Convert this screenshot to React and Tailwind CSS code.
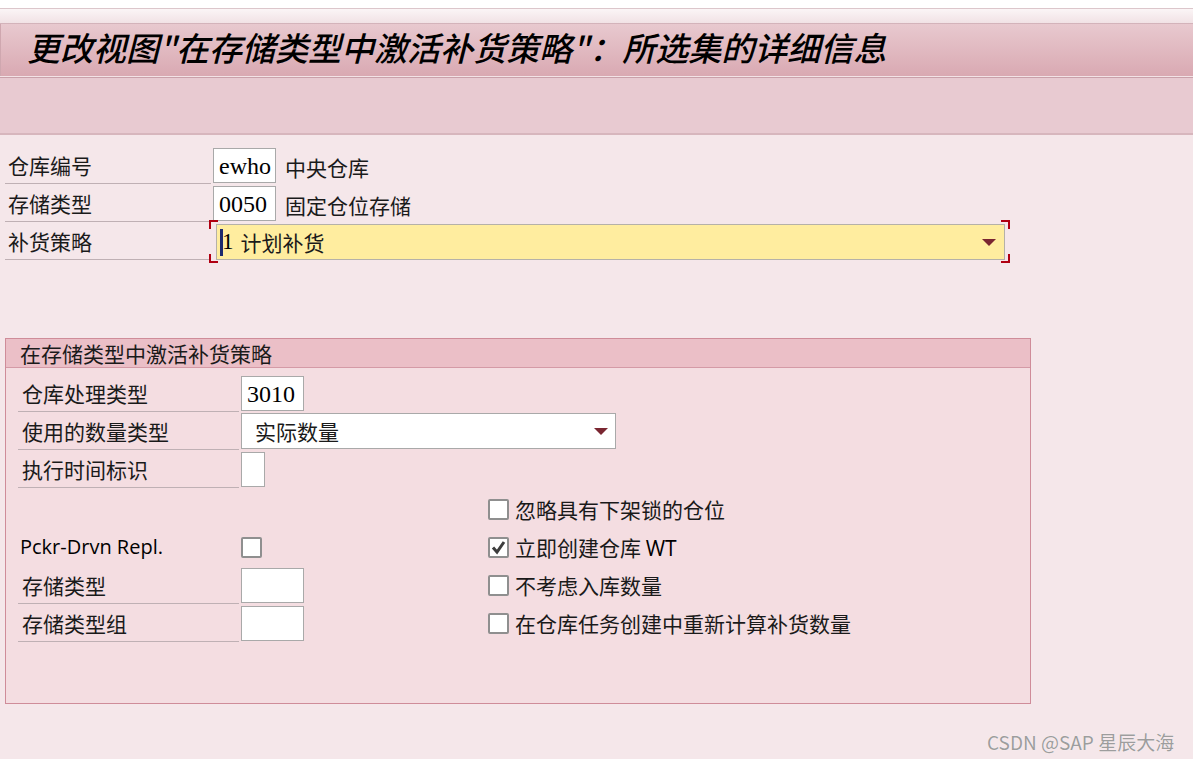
import React from 'react';

const cjk = { fontFamily: '"Noto Sans CJK SC", "Noto Sans", sans-serif' };
const serif = { fontFamily: '"Liberation Serif", "Noto Sans CJK SC", serif' };
const latin = { fontFamily: '"Open Sans", "Noto Sans", sans-serif' };

// small dark-red dropdown arrow
const Arrow = () => (
  <svg width="14" height="8" viewBox="0 0 14 8">
    <path d="M0 0 H14 L7 7 Z" fill="#7a2631" />
  </svg>
);

const Checkbox = ({ checked }) => (
  <div className="w-[21px] h-[21px] border-2 border-[#8f8f8f] rounded-[2px] bg-white flex items-center justify-center">
    {checked && (
      <svg width="15" height="15" viewBox="0 0 15 15">
        <path d="M2 7.5 L6 12 L13 2" fill="none" stroke="#3d3d3d" strokeWidth="3" />
      </svg>
    )}
  </div>
);

// one label row with underline
function Row({ label, labelW, children, line = true, pl = 'pl-[3px]' }) {
  return (
    <div className="flex h-[38px]">
      <div
        className={`${labelW} ${pl} pt-[3px] h-[38px] flex items-center text-[21px] text-[#1a1a1a] ${line ? 'border-b border-[#bfb0b4]' : ''}`}
      >
        {label}
      </div>
      {children}
    </div>
  );
}

const Box = ({ w, text, size = 'text-[24px]' }) => (
  <div
    className={`${w} h-[35px] mt-[2px] ml-[2px] bg-white border border-[#a9a9a9] flex items-center pl-[5px] ${size} text-black`}
    style={serif}
  >
    {text}
  </div>
);

export default function App() {
  return (
    <div className="w-[1193px] h-[759px] bg-[#f5e7ea] relative overflow-hidden" style={cjk}>
      <div className="h-[8px] bg-white" />
      <div className="h-[1px] bg-[#dcc6cb]" />
      <div className="h-[14px] bg-gradient-to-b from-[#fbf5f6] to-[#f1e2e5]" />
      <div className="h-[1px] bg-[#d3b3ba]" />

      {/* title bar */}
      <div className="h-[52px] bg-gradient-to-b from-[#e8c9cf] to-[#d9a9b2] flex items-center pl-[26px] pb-[6px] border-l border-[#cfa7af]">
        <h1 className="text-[33px] italic font-medium text-black leading-none">
          更改视图"在存储类型中激活补货策略"：所选集的详细信息
        </h1>
      </div>
      <div className="h-[1px] bg-[#f3e3e6]" />
      <div className="h-[1px] bg-[#c9a1aa]" />

      {/* toolbar area */}
      <div className="h-[55px] bg-[#e8cad1]" />
      <div className="h-[2px] bg-[#d7b6bd]" />

      {/* header form */}
      <div className="pt-[11px] pl-[5px]">
        <Row label="仓库编号" labelW="w-[206px]">
          <Box w="w-[63px]" text="ewho" />
          <span className="ml-[9px] mt-[4px] h-[35px] flex items-center text-[21px] text-[#1a1a1a]">中央仓库</span>
        </Row>
        <Row label="存储类型" labelW="w-[206px]">
          <Box w="w-[63px]" text="0050" />
          <span className="ml-[9px] mt-[4px] h-[35px] flex items-center text-[21px] text-[#1a1a1a]">固定仓位存储</span>
        </Row>
        <Row label="补货策略" labelW="w-[206px]">
          <div className="relative ml-[5px] mt-[2px]">
            <div className="w-[789px] h-[36px] bg-[#ffed9f] border border-[#b5b1a8] flex items-center pl-[3px] pr-[8px]">
              <span className="w-[3px] h-[27px] bg-[#1c2a6e]" />
              <span className="text-[23px] text-black ml-[-1px]" style={serif}>1</span>
              <span className="text-[21px] text-[#1a1a1a] ml-[7px] mt-[2px]">计划补货</span>
              <span className="ml-auto mt-[1px]"><Arrow /></span>
            </div>
            {/* focus brackets */}
            <div className="absolute left-[-7px] top-[-4px] w-[9px] h-[9px] border-l-2 border-t-2 border-[#b00012]" />
            <div className="absolute left-[-7px] bottom-[-3px] w-[9px] h-[9px] border-l-2 border-b-2 border-[#b00012]" />
            <div className="absolute right-[-5px] top-[-4px] w-[9px] h-[9px] border-r-2 border-t-2 border-[#b00012]" />
            <div className="absolute right-[-5px] bottom-[-3px] w-[9px] h-[9px] border-r-2 border-b-2 border-[#b00012]" />
          </div>
        </Row>
      </div>

      {/* group box */}
      <div className="ml-[5px] mt-[78px] w-[1026px] h-[366px] border border-[#cf8c99] bg-[#f4dde1]">
        <div className="h-[29px] bg-[#ebbfc7] border-b border-[#d49aa6] flex items-center pl-[14px] pt-[2px] text-[21px] text-[#1a1a1a]">
          在存储类型中激活补货策略
        </div>
        <div className="pt-[6px] pl-[12px]">
          <Row label="仓库处理类型" labelW="w-[221px]" pl="pl-[4px]">
            <Box w="w-[63px]" text="3010" />
          </Row>
          <Row label="使用的数量类型" labelW="w-[221px]" pl="pl-[4px]">
            <div className="w-[375px] h-[36px] mt-[1px] ml-[2px] bg-white border border-[#a9a9a9] flex items-center pl-[13px] pr-[7px]">
              <span className="text-[21px] text-[#1a1a1a] mt-[2px]">实际数量</span>
              <span className="ml-auto mt-[1px]"><Arrow /></span>
            </div>
          </Row>
          <Row label="执行时间标识" labelW="w-[221px]" pl="pl-[4px]">
            <Box w="w-[24px]" text="" />
          </Row>

          <div className="mt-[2px]">
            {[
              { left: null, right: '忽略具有下架锁的仓位', checked: false },
              { left: 'pckr', right: '立即创建仓库 WT', checked: true },
              { left: '存储类型', right: '不考虑入库数量', checked: false },
              { left: '存储类型组', right: '在仓库任务创建中重新计算补货数量', checked: false },
            ].map((r, i) => (
              <div key={i} className="flex h-[38px]">
                <div className="w-[470px] flex">
                  {r.left === 'pckr' && (
                    <div className="flex items-center h-[38px]">
                      <span className="w-[223px] pl-[2px] text-[20px] text-black" style={latin}>
                        Pckr-Drvn Repl.
                      </span>
                      <Checkbox />
                    </div>
                  )}
                  {r.left && r.left !== 'pckr' && (
                    <Row label={r.left} labelW="w-[221px]" pl="pl-[4px]">
                      <Box w="w-[63px]" text="" />
                    </Row>
                  )}
                </div>
                <div className="flex items-center gap-[6px] h-[38px]">
                  <Checkbox checked={r.checked} />
                  <span className="text-[21px] text-[#1a1a1a] pt-[2px]">
                    {r.right.endsWith(' WT') ? (
                      <>
                        {r.right.slice(0, -3)}{' '}
                        <span style={latin} className="text-black">WT</span>
                      </>
                    ) : (
                      r.right
                    )}
                  </span>
                </div>
              </div>
            ))}
          </div>
        </div>
      </div>

      {/* watermark */}
      <div className="absolute left-[987px] top-[728px] text-[19px] text-[#9d9d9d] [text-shadow:0_0_1px_#ffffff]">
        CSDN @SAP 星辰大海
      </div>
    </div>
  );
}
